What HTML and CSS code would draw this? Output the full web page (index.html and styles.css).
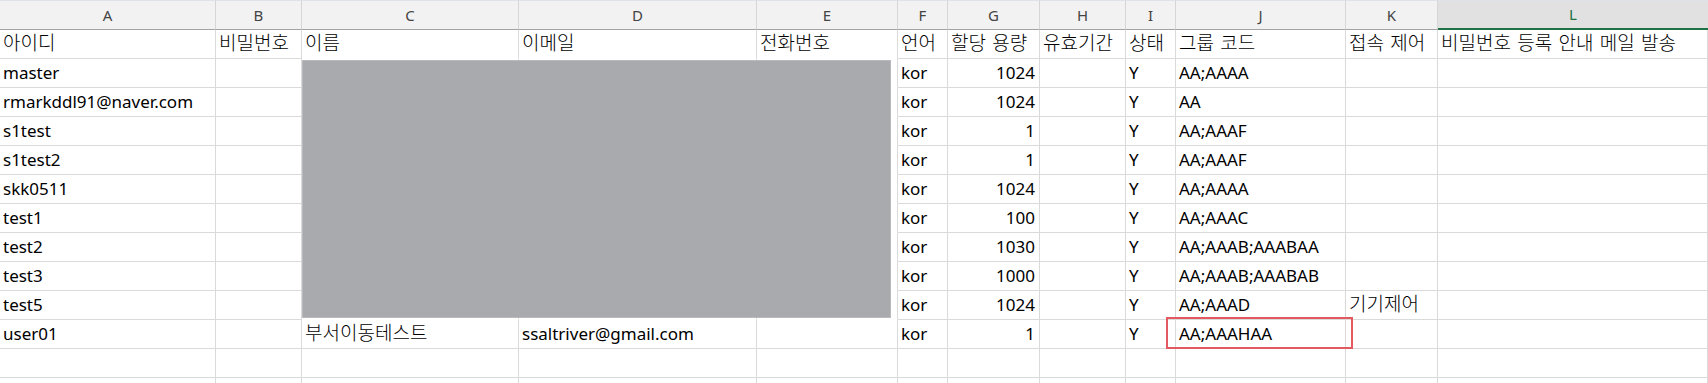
FILE: index.html
```html
<!DOCTYPE html>
<html lang="ko">
<head>
<meta charset="utf-8">
<title>Sheet</title>
<link rel="stylesheet" href="styles.css">
</head>
<body>
<div class="sheet">
  <div class="grid">
    <div class="hd">A</div><div class="hd">B</div><div class="hd">C</div><div class="hd">D</div><div class="hd">E</div><div class="hd">F</div><div class="hd">G</div><div class="hd">H</div><div class="hd">I</div><div class="hd">J</div><div class="hd">K</div><div class="hd sel">L</div>

    <div class="c"><span class="ko">아이디</span></div><div class="c"><span class="ko">비밀번호</span></div><div class="c fill"><span class="ko">이름</span></div><div class="c fill"><span class="ko">이메일</span></div><div class="c fill"><span class="ko">전화번호</span></div><div class="c"><span class="ko">언어</span></div><div class="c"><span class="ko">할당 용량</span></div><div class="c"><span class="ko">유효기간</span></div><div class="c"><span class="ko">상태</span></div><div class="c"><span class="ko">그룹 코드</span></div><div class="c"><span class="ko">접속 제어</span></div><div class="c"><span class="ko">비밀번호 등록 안내 메일 발송</span></div>

    <div class="c">master</div><div class="c"></div><div class="c fill"></div><div class="c fill"></div><div class="c fill"></div><div class="c">kor</div><div class="c num">1024</div><div class="c"></div><div class="c">Y</div><div class="c">AA;AAAA</div><div class="c"></div><div class="c"></div>

    <div class="c">rmarkddl91@naver.com</div><div class="c"></div><div class="c fill"></div><div class="c fill"></div><div class="c fill"></div><div class="c">kor</div><div class="c num">1024</div><div class="c"></div><div class="c">Y</div><div class="c">AA</div><div class="c"></div><div class="c"></div>

    <div class="c">s1test</div><div class="c"></div><div class="c fill"></div><div class="c fill"></div><div class="c fill"></div><div class="c">kor</div><div class="c num">1</div><div class="c"></div><div class="c">Y</div><div class="c">AA;AAAF</div><div class="c"></div><div class="c"></div>

    <div class="c">s1test2</div><div class="c"></div><div class="c fill"></div><div class="c fill"></div><div class="c fill"></div><div class="c">kor</div><div class="c num">1</div><div class="c"></div><div class="c">Y</div><div class="c">AA;AAAF</div><div class="c"></div><div class="c"></div>

    <div class="c">skk0511</div><div class="c"></div><div class="c fill"></div><div class="c fill"></div><div class="c fill"></div><div class="c">kor</div><div class="c num">1024</div><div class="c"></div><div class="c">Y</div><div class="c">AA;AAAA</div><div class="c"></div><div class="c"></div>

    <div class="c">test1</div><div class="c"></div><div class="c fill"></div><div class="c fill"></div><div class="c fill"></div><div class="c">kor</div><div class="c num">100</div><div class="c"></div><div class="c">Y</div><div class="c">AA;AAAC</div><div class="c"></div><div class="c"></div>

    <div class="c">test2</div><div class="c"></div><div class="c fill"></div><div class="c fill"></div><div class="c fill"></div><div class="c">kor</div><div class="c num">1030</div><div class="c"></div><div class="c">Y</div><div class="c">AA;AAAB;AAABAA</div><div class="c"></div><div class="c"></div>

    <div class="c">test3</div><div class="c"></div><div class="c fill"></div><div class="c fill"></div><div class="c fill"></div><div class="c">kor</div><div class="c num">1000</div><div class="c"></div><div class="c">Y</div><div class="c">AA;AAAB;AAABAB</div><div class="c"></div><div class="c"></div>

    <div class="c">test5</div><div class="c"></div><div class="c fill"></div><div class="c fill"></div><div class="c fill"></div><div class="c">kor</div><div class="c num">1024</div><div class="c"></div><div class="c">Y</div><div class="c">AA;AAAD</div><div class="c"><span class="ko">기기제어</span></div><div class="c"></div>

    <div class="c">user01</div><div class="c"></div><div class="c fill last"><span class="ko">부서이동테스트</span></div><div class="c fill last">ssaltriver@gmail.com</div><div class="c fill last"></div><div class="c">kor</div><div class="c num">1</div><div class="c"></div><div class="c">Y</div><div class="c">AA;AAAHAA</div><div class="c"></div><div class="c"></div>

    <div class="c"></div><div class="c"></div><div class="c"></div><div class="c"></div><div class="c"></div><div class="c"></div><div class="c"></div><div class="c"></div><div class="c"></div><div class="c"></div><div class="c"></div><div class="c"></div>

    <div class="c"></div><div class="c"></div><div class="c"></div><div class="c"></div><div class="c"></div><div class="c"></div><div class="c"></div><div class="c"></div><div class="c"></div><div class="c"></div><div class="c"></div><div class="c"></div>
  </div>
  <div class="redact"></div>
  <div class="mark"></div>
</div>
</body>
</html>
```
FILE: styles.css
```css
* { box-sizing: border-box; }
html, body {
  margin: 0;
  padding: 0;
  background: #ffffff;
  overflow: hidden;
}
.sheet {
  position: relative;
  width: 1708px;
  height: 383px;
  overflow: hidden;
  font-family: "Noto Sans", "Noto Sans CJK KR", sans-serif;
}
.grid {
  display: grid;
  grid-template-columns: 216px 86px 217px 238px 141px 50px 92px 86px 50px 170px 92px 1fr;
  grid-template-rows: 30px;
  grid-auto-rows: 29px;
}
.hd {
  background: #f2f2f2;
  border-top: 1px solid #dfe3e8;
  border-right: 1px solid #d6d6d6;
  border-bottom: 1px solid #a3a3a3;
  color: #444444;
  font-size: 15px;
  display: flex;
  align-items: center;
  justify-content: center;
  line-height: 1;
}
.hd.sel {
  background: #e1e1e1;
  color: #217346;
  border-bottom: 2px solid #217346;
  border-right: none;
}
.c {
  border-right: 1px solid #dadada;
  border-bottom: 1px solid #dadada;
  font-size: 17px;
  line-height: 28px;
  color: #000000;
  padding: 0 3px;
  white-space: nowrap;
  overflow: visible;
}
.ko {
  font-family: "Noto Sans CJK KR", "Noto Sans", sans-serif;
  font-size: 19px;
  font-weight: 300;
  line-height: 20px;
  word-spacing: 1px;
}
.c.num { text-align: right; padding-right: 4px; }
.c.fill { border-bottom-color: #ffffff; }
.c.fill.last { border-bottom-color: #dadada; }
.redact {
  position: absolute;
  left: 302px;
  top: 60px;
  width: 589px;
  height: 258px;
  background: #a9aaad;
  border: 1px solid #b9babd;
}
.mark {
  position: absolute;
  left: 1166px;
  top: 317px;
  width: 187px;
  height: 32px;
  border: 2px solid #e25a5f;
}
```
